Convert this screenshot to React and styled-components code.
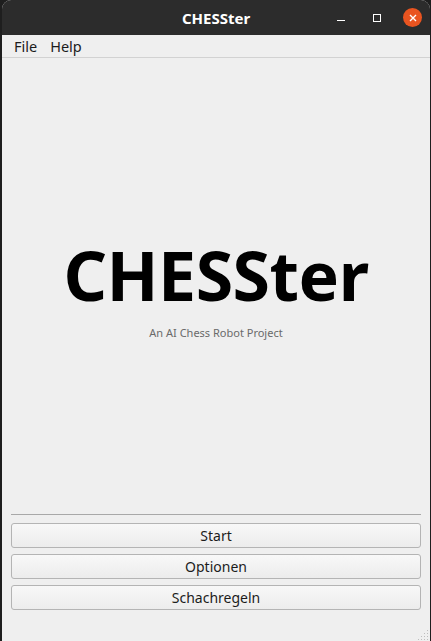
import React from 'react'
import styled, { createGlobalStyle } from 'styled-components'

const GlobalStyle = createGlobalStyle`
  html, body {
    margin: 0;
    padding: 0;
    background: #1e1e1e;
  }
  #root {
    height: 641px;
  }
`

const UI_FONT = `'Noto Sans', 'Open Sans', sans-serif`

const Frame = styled.div`
  position: relative;
  display: flex;
  flex-direction: column;
  height: 641px;
  margin-left: 2px;
  margin-right: 1px;
  background: #efefef;
  border-radius: 9px 9px 0 0;
  overflow: hidden;
  font-family: ${UI_FONT};
`

const TitleBar = styled.div`
  position: relative;
  display: flex;
  align-items: center;
  justify-content: center;
  height: 35px;
  flex-shrink: 0;
  background: #2c2c2c;
  color: #ffffff;
  font-size: 15px;
  font-weight: 700;
`

const WindowControls = styled.div`
  position: absolute;
  right: 8px;
  top: 0;
  bottom: 0;
  display: flex;
  align-items: center;
  gap: 17px;
`

const ControlButton = styled.div`
  width: 19px;
  height: 19px;
  display: flex;
  align-items: center;
  justify-content: center;
  border-radius: 50%;
  background: ${(p) => (p.$close ? '#e95420' : 'transparent')};
`

const MenuBar = styled.div`
  display: flex;
  align-items: center;
  gap: 11px;
  height: 22px;
  padding: 0 11px;
  flex-shrink: 0;
  border-bottom: 1px solid #d2d2d2;
  font-size: 14.5px;
  color: #1c1c1c;
`

const MenuItem = styled.span`
  padding: 0 1px;
`

const Hero = styled.div`
  flex: 1;
  display: flex;
  flex-direction: column;
  align-items: center;
  justify-content: center;
  padding-top: 7px;
`

const AppTitle = styled.h1`
  margin: 0;
  font-family: ${UI_FONT};
  font-size: 68px;
  font-weight: 700;
  line-height: 70px;
  letter-spacing: -0.5px;
  color: #000000;
`

const Subtitle = styled.div`
  margin-top: 15px;
  font-size: 11px;
  line-height: 15px;
  color: #6a6a6a;
`

const Footer = styled.div`
  display: flex;
  flex-direction: column;
  gap: 6px;
  padding: 0 9px 31px;
`

const Separator = styled.hr`
  margin: 0 0 2px;
  border: none;
  border-top: 1px solid #a8a8a8;
  height: 0;
`

const PushButton = styled.button`
  height: 25px;
  border: 1px solid #b4b4b4;
  border-radius: 3px;
  background: linear-gradient(#f8f8f8, #ececec);
  font-family: ${UI_FONT};
  font-size: 14px;
  color: #1c1c1c;
  padding: 0;
`

const Grip = styled.svg`
  position: absolute;
  right: 2px;
  bottom: 1px;
`

const gripDots = [
  [9, 0], [9, 3], [6, 3], [9, 6], [6, 6], [3, 6], [9, 9], [6, 9], [3, 9], [0, 9],
]

const App = () => (
  <>
    <GlobalStyle />
    <Frame>
      <TitleBar>
        CHESSter
        <WindowControls>
          <ControlButton>
            <svg width="10" height="10" viewBox="0 0 10 10">
              <line x1="1" y1="7.5" x2="9" y2="7.5" stroke="#fff" strokeWidth="1" />
            </svg>
          </ControlButton>
          <ControlButton>
            <svg width="10" height="10" viewBox="0 0 10 10">
              <rect x="1.5" y="1.5" width="7" height="7" fill="none" stroke="#fff" strokeWidth="1" />
            </svg>
          </ControlButton>
          <ControlButton $close>
            <svg width="10" height="10" viewBox="0 0 10 10">
              <path d="M2 2 L8 8 M8 2 L2 8" stroke="#fff" strokeWidth="1.4" />
            </svg>
          </ControlButton>
        </WindowControls>
      </TitleBar>
      <MenuBar>
        <MenuItem>File</MenuItem>
        <MenuItem>Help</MenuItem>
      </MenuBar>
      <Hero>
        <AppTitle>CHESSter</AppTitle>
        <Subtitle>An AI Chess Robot Project</Subtitle>
      </Hero>
      <Footer>
        <Separator />
        <PushButton>Start</PushButton>
        <PushButton>Optionen</PushButton>
        <PushButton>Schachregeln</PushButton>
      </Footer>
      <Grip width="10" height="10" viewBox="0 0 10 10">
        {gripDots.map(([x, y]) => (
          <rect key={`${x}-${y}`} x={x} y={y} width="1" height="1" fill="#bdbdbd" />
        ))}
      </Grip>
    </Frame>
  </>
)

export default App
